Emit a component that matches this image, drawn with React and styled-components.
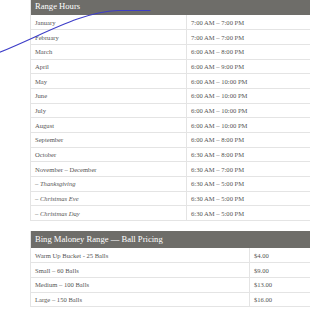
import styled, { createGlobalStyle } from 'styled-components'

const Global = createGlobalStyle`
  html, body {
    margin: 0;
    background: #fff;
    overflow: hidden;
  }
  body {
    font-family: 'Liberation Serif', 'Times New Roman', serif;
  }
`

const hours = [
  ['January', '7:00 AM – 7:00 PM'],
  ['February', '7:00 AM – 7:00 PM'],
  ['March', '6:00 AM – 8:00 PM'],
  ['April', '6:00 AM – 9:00 PM'],
  ['May', '6:00 AM – 10:00 PM'],
  ['June', '6:00 AM – 10:00 PM'],
  ['July', '6:00 AM – 10:00 PM'],
  ['August', '6:00 AM – 10:00 PM'],
  ['September', '6:00 AM – 8:00 PM'],
  ['October', '6:30 AM – 8:00 PM'],
  ['November – December', '6:30 AM – 7:00 PM'],
  ['– Thanksgiving', '6:30 AM – 5:00 PM', true],
  ['– Christmas Eve', '6:30 AM – 5:00 PM', true],
  ['– Christmas Day', '6:30 AM – 5:00 PM', true],
]

const pricing = [
  ['Warm Up Bucket - 25 Balls', '$4.00'],
  ['Small – 60 Balls', '$9.00'],
  ['Medium – 100 Balls', '$13.00'],
  ['Large – 150 Balls', '$16.00'],
]

export default function App() {
  return (
    <>
      <Global />
      <Page>
        <Table $first>
          <colgroup>
            <col style={{ width: 156 }} />
            <col />
          </colgroup>
          <thead>
            <tr>
              <Head colSpan={2}>Range Hours</Head>
            </tr>
          </thead>
          <tbody>
            {hours.map(([label, time, italic]) => (
              <tr key={label}>
                <Cell $italic={italic}>{label}</Cell>
                <Cell>{time}</Cell>
              </tr>
            ))}
          </tbody>
        </Table>

        <Table>
          <colgroup>
            <col style={{ width: 219 }} />
            <col />
          </colgroup>
          <thead>
            <tr>
              <Head colSpan={2}>Bing Maloney Range — Ball Pricing</Head>
            </tr>
          </thead>
          <tbody>
            {pricing.map(([label, price]) => (
              <tr key={label}>
                <Cell>{label}</Cell>
                <Cell>{price}</Cell>
              </tr>
            ))}
          </tbody>
        </Table>
      </Page>

      <Scribble viewBox='0 0 310 60' width='310' height='60'>
        <path
          d='M-2 53 C 45 34, 80 12, 118 10.5 L 150 10.5'
          fill='none'
          stroke='#3d3dc8'
          strokeWidth='1.1'
          strokeLinecap='round'
        />
      </Scribble>
    </>
  )
}

const Page = styled.div`
  width: 310px;
  height: 310px;
  padding-left: 30px;
  box-sizing: border-box;
  overflow: hidden;
  display: flex;
  flex-direction: column;
  gap: 10px;
`

const Table = styled.table`
  width: 300px;
  flex: none;
  border-collapse: collapse;
  table-layout: fixed;
  margin-top: ${(p) => (p.$first ? '-2px' : '0')};
  border-left: 1px solid #e4e4e4;
`

const Head = styled.th`
  height: 17px;
  padding: 0 4px;
  box-sizing: border-box;
  background: #6e6d69;
  color: #fff;
  font-weight: 400;
  font-size: 8.6px;
  text-align: left;
  line-height: 17px;
`

const Cell = styled.td`
  height: 14.7px;
  padding: 0 4px;
  box-sizing: border-box;
  border-bottom: 1px solid #e4e4e4;
  font-size: 6.6px;
  color: #555;
  font-style: ${(p) => (p.$italic ? 'italic' : 'normal')};
  white-space: nowrap;
  & + & {
    border-left: 1px solid #e4e4e4;
  }
`

const Scribble = styled.svg`
  position: absolute;
  left: 0;
  top: 0;
  pointer-events: none;
`
